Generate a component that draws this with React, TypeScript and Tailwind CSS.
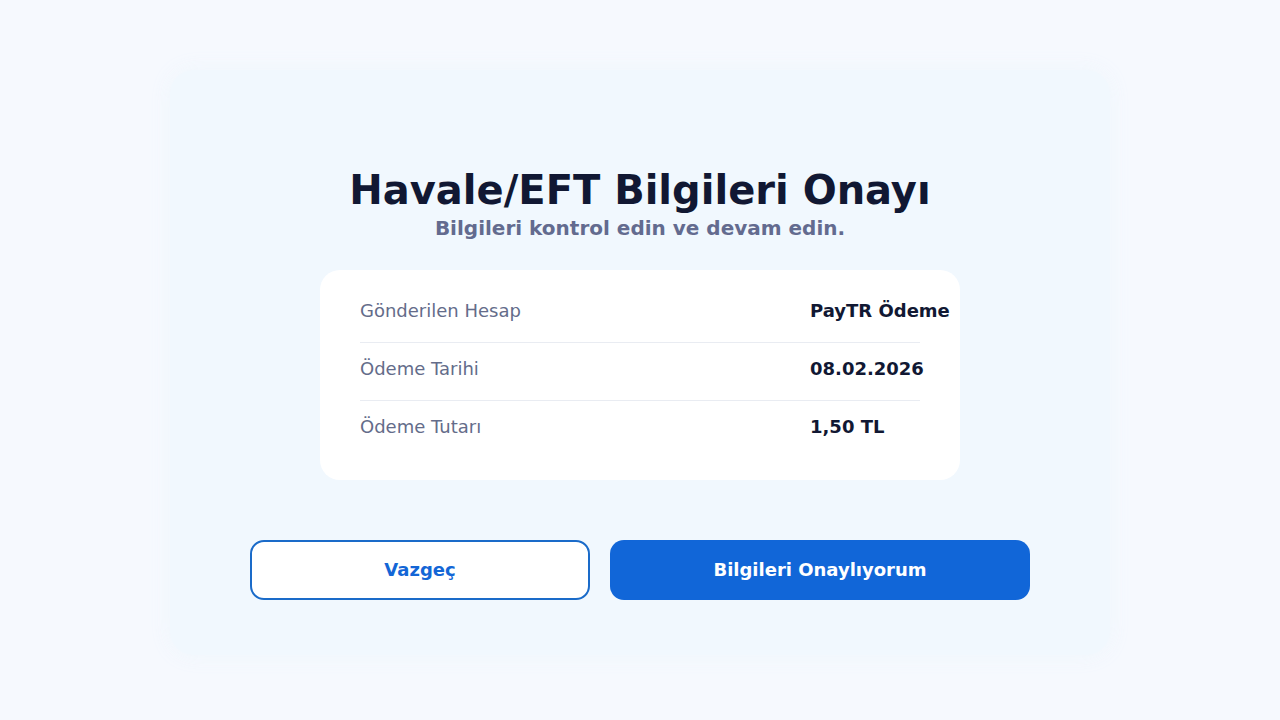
import React from 'react';

const rows = [
  { label: 'Gönderilen Hesap', value: 'PayTR Ödeme' },
  { label: 'Ödeme Tarihi', value: '08.02.2026' },
  { label: 'Ödeme Tutarı', value: '1,50 TL' },
];

export default function App() {
  return (
    <div className="min-h-screen w-full bg-[#f6f9fe] flex justify-center pt-[70px] font-['DejaVu_Sans',sans-serif]">
      <div className="w-[940px] h-[585px] bg-[#f1f8fe] rounded-[24px] shadow-[0_0_20px_rgba(238,246,253,0.9)] flex flex-col items-center pt-[98px]">
        <h1 className="text-[40px] leading-[44px] font-bold text-[#111833]">Havale/EFT Bilgileri Onayı</h1>
        <p className="mt-[4px] text-[20px] leading-[24px] font-bold text-[#636b8f]">Bilgileri kontrol edin ve devam edin.</p>

        <div className="mt-[30px] w-[640px] bg-white rounded-[20px] px-[40px] pt-[15px] pb-[22px]">
          {rows.map((r, i) => (
            <div
              key={r.label}
              className={`grid grid-cols-[450px_110px] items-center pt-[13px] pb-[18px] leading-[26px] ${i < rows.length - 1 ? 'border-b border-[#e9ecf2]' : ''}`}
            >
              <span className="text-[18px] text-[#646c8a] whitespace-nowrap">{r.label}</span>
              <span className="text-[18px] font-bold text-[#111833] whitespace-nowrap">{r.value}</span>
            </div>
          ))}
        </div>

        <div className="mt-[60px] flex gap-[20px]">
          <button className="w-[340px] h-[60px] rounded-[14px] border-2 border-[#1a6bc9] bg-white text-[18px] leading-[24px] font-bold text-[#1366d6]">
            Vazgeç
          </button>
          <button className="w-[420px] h-[60px] rounded-[14px] bg-[#1166d8] text-[18px] leading-[24px] font-bold text-white">
            Bilgileri Onaylıyorum
          </button>
        </div>
      </div>
    </div>
  );
}
